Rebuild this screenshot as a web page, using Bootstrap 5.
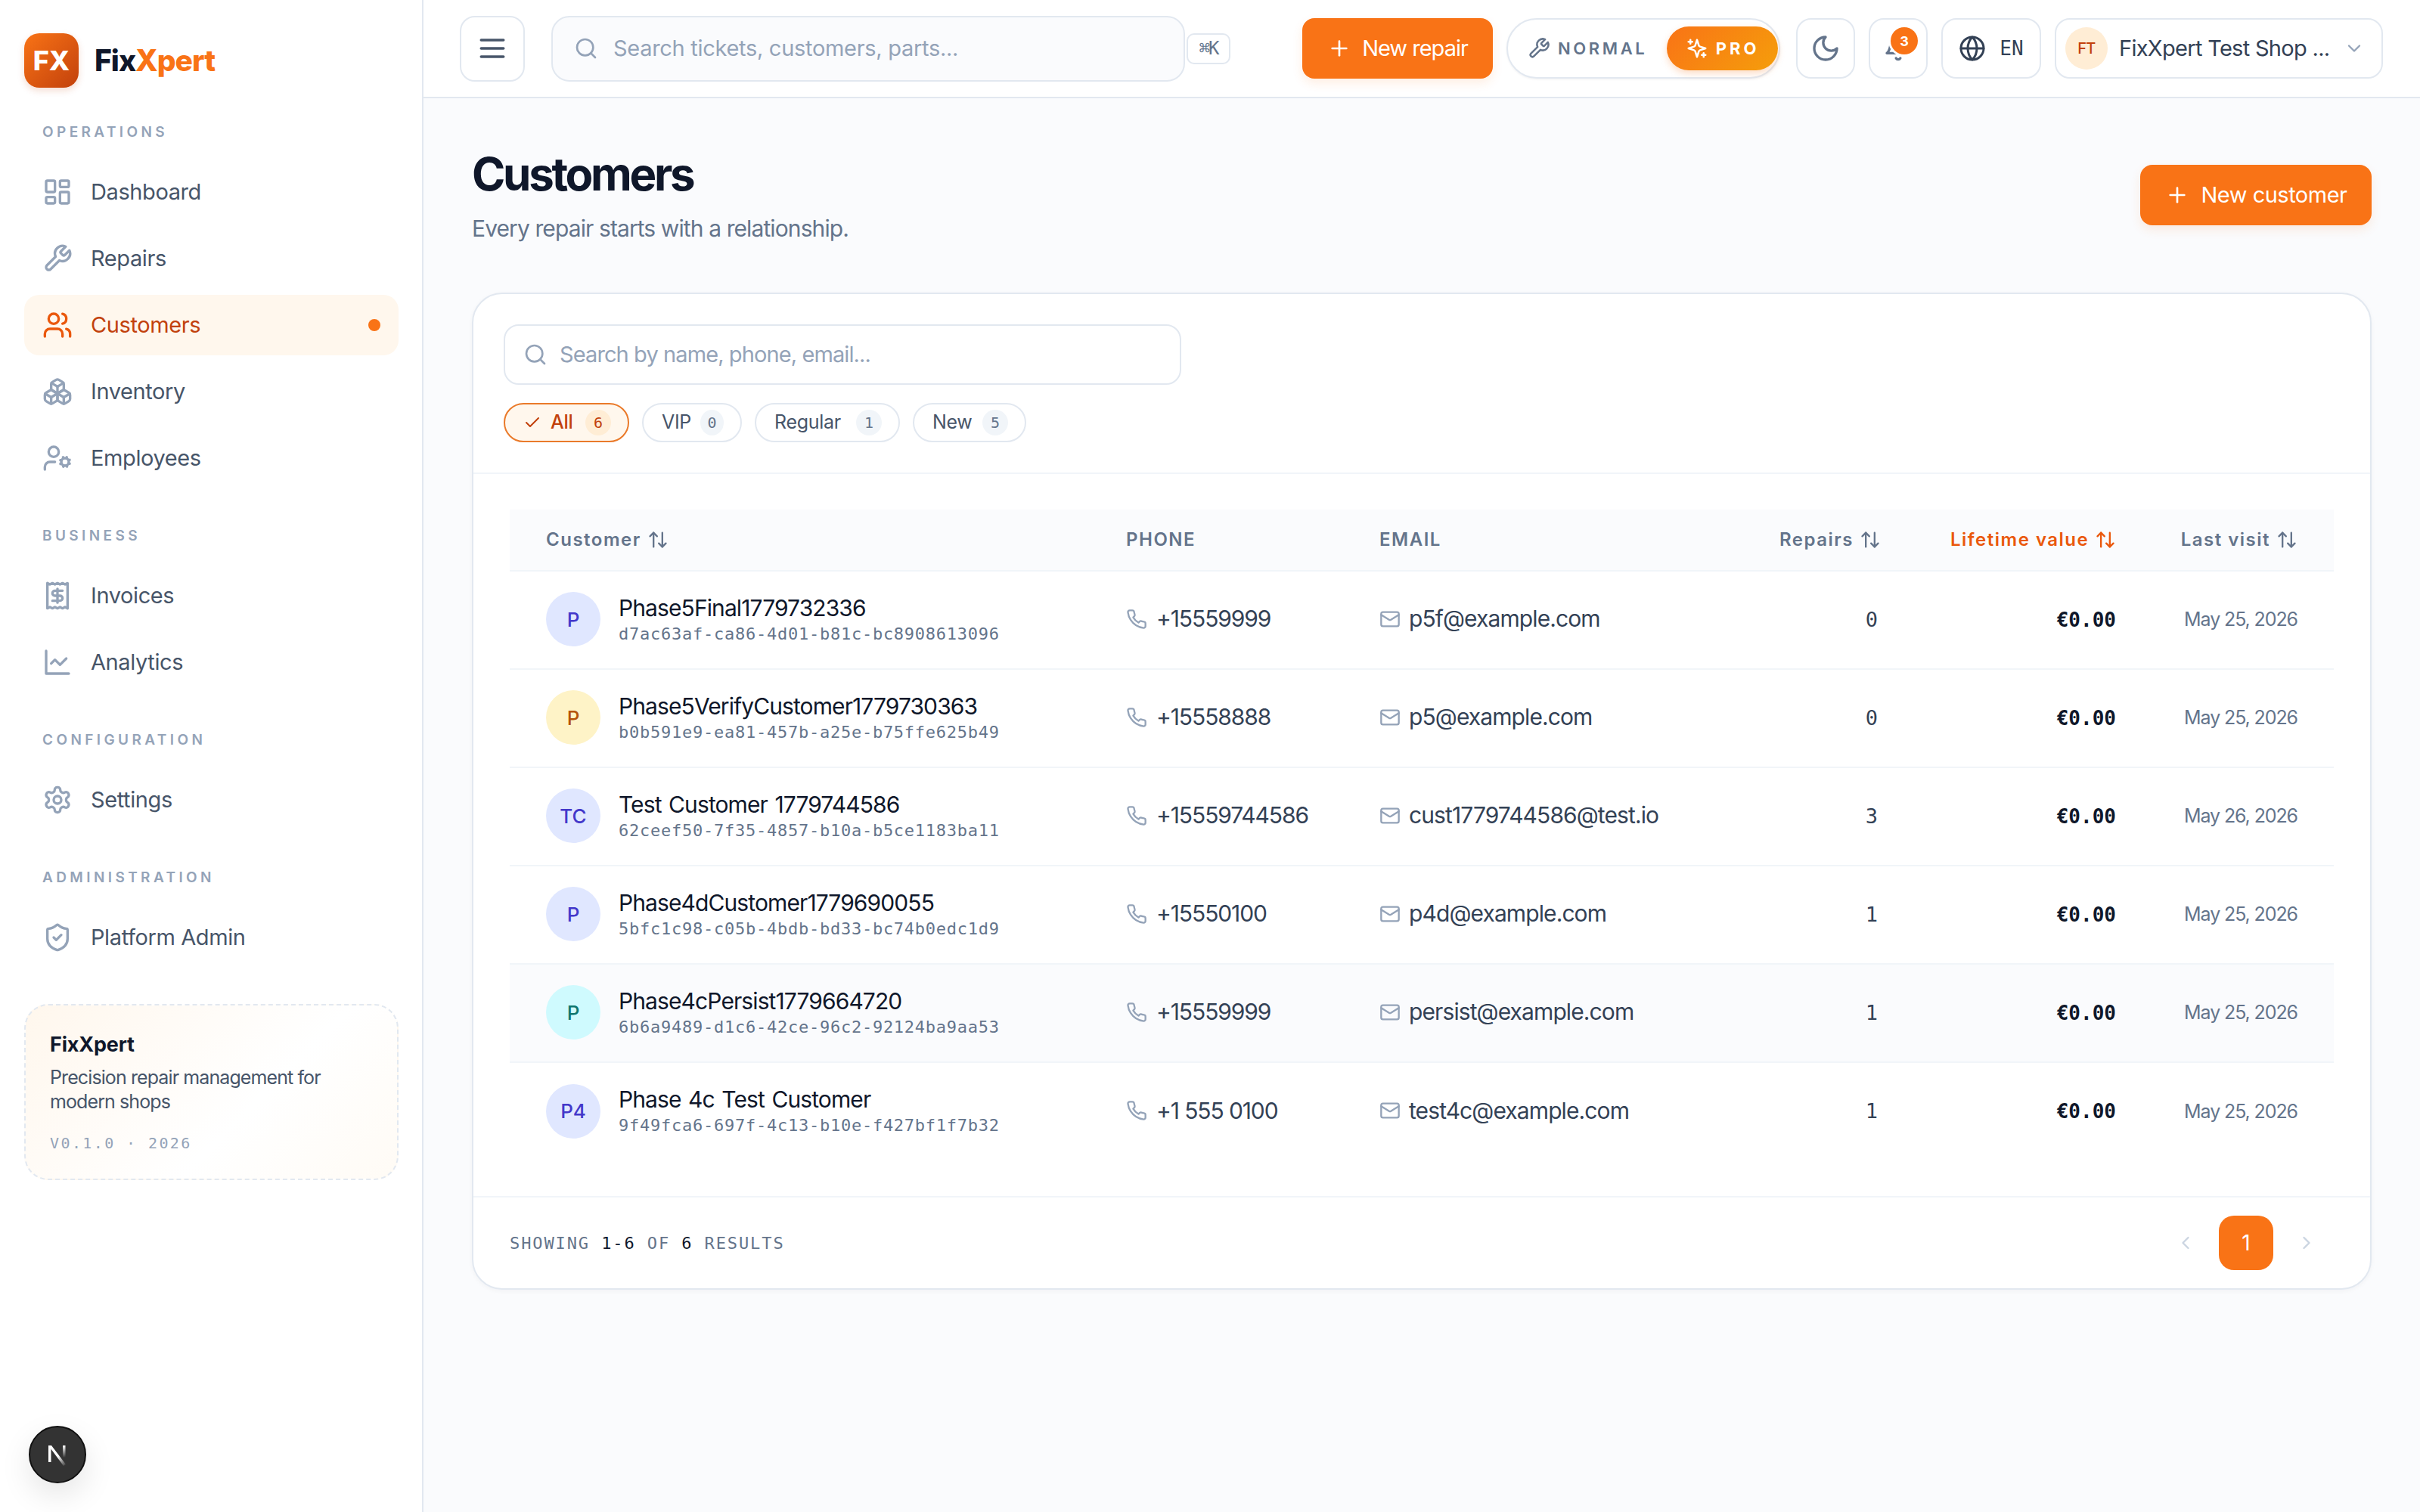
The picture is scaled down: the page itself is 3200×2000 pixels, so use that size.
<!DOCTYPE html>
<html lang="en">
<head>
<meta charset="utf-8">
<title>Customers</title>
<link href="https://cdn.jsdelivr.net/npm/bootstrap@5.3.0/dist/css/bootstrap.min.css" rel="stylesheet">
<style>
body{font-family:Inter,"Liberation Sans",sans-serif;background:#fafbfd;color:#0f172a;}
svg.ic{fill:none;stroke:currentColor;stroke-width:2;stroke-linecap:round;stroke-linejoin:round;flex:none;display:block}
.mono{font-family:"DejaVu Sans Mono","Liberation Mono",monospace}
.shell{min-height:2000px}
.side{width:560px;flex:none;background:#fff;border-right:2px solid #e2e8f0;padding:44px 31px 0 32px}
.brand{gap:21px;height:72px;margin-bottom:46px}
.logo-box{width:72px;height:72px;border-radius:20px;background:linear-gradient(135deg,#f97316,#c2410c);color:#fff;font-weight:800;font-size:36px;box-shadow:0 4px 10px rgba(194,65,12,.18)}
.brand-name{font-weight:800;font-size:39px;letter-spacing:-1px;color:#0f172a}
.brand-name span{color:#f97316}
.sect{font-size:19px;font-weight:600;letter-spacing:4.4px;color:#94a3b8;padding-left:24px;line-height:26px;text-transform:uppercase}
.sect-gap{margin-top:50px}
.side-nav{gap:8px;margin-top:26px}
.side-link{height:80px;border-radius:20px;padding:0 24px;gap:24px;font-size:29px;letter-spacing:-.4px;color:#475569;text-decoration:none}
.side-link svg{color:#94a3b8}
.side-link.on{background:#fff7ed;color:#c2410c}
.side-link.on svg{color:#ea580c}
.dot-on{width:16px;height:16px;border-radius:50%;background:#f97316;margin-left:auto}
.promo{margin-top:48px;height:233px;border:2px dashed #e2e8f0;border-radius:32px;background:linear-gradient(135deg,#fff7ed,#fff 60%,#fffbf5);padding:34px 32px 0}
.promo-t{font-size:27px;font-weight:700;letter-spacing:-.2px;line-height:36px}
.promo-d{font-size:25px;letter-spacing:-.9px;color:#475569;line-height:32px;margin-top:9px}
.promo-v{font-size:20px;letter-spacing:2.4px;color:#94a3b8;margin-top:25px;line-height:28px}
.nx{position:fixed;left:38px;top:1886px;width:76px;height:76px;border-radius:50%;background:#333;border:2px solid #111;color:#fff;box-shadow:0 16px 40px rgba(0,0,0,.1)}
.main-col{min-width:0}
.top{height:130px;background:#fff;border-bottom:2px solid #e2e8f0;padding:0 48px 0 48px}
.tbtn{border:2px solid #e2e8f0;border-radius:20px;background:#fff;height:80px;color:#64748b}
.menu-b{width:86px;height:87px;margin-right:35px;color:#475569}
.tsearch{width:838px;height:87px;border:2px solid #e2e8f0;border-radius:24px;background:#fafbfd;padding:0 28px;gap:20px;font-size:29px;letter-spacing:-.3px;color:#94a3b8}
.kbd-box{width:58px;height:41px;margin-left:2px;border:2px solid #e2e8f0;border-radius:10px;font-size:24px;letter-spacing:-2px;color:#64748b}
.btn-or{background:#f97316;border:0;color:#fff;border-radius:16px;height:80px;font-size:29px;letter-spacing:-1px;gap:14px;box-shadow:0 6px 14px rgba(249,115,22,.12)}
.btn-or:hover{background:#f97316;color:#fff}
.nrep{width:252px;margin-left:95px;margin-right:18px}
.mode{width:362px;height:80px;border:2px solid #e2e8f0;border-radius:40px;background:#fff;padding:0 1px 0 26px;margin-right:21px;box-shadow:0 1px 3px rgba(15,23,42,.06)}
.mode-n{gap:10px;font-size:22px;font-weight:600;letter-spacing:3.6px;color:#64748b}
.mode-p{margin-left:auto;width:147px;height:58px;border-radius:30px;background:linear-gradient(135deg,#f97316,#f59e0b);color:#fff;gap:10px;font-size:22px;font-weight:700;letter-spacing:4px;box-shadow:0 4px 10px rgba(249,115,22,.25)}
.square{width:78px;margin-right:18px}
.lang{width:132px;margin-right:18px;gap:18px;color:#334155;font-size:26px;font-weight:500}
.shop{width:434px;padding:0 22px 0 12px;gap:15px;font-size:29px;letter-spacing:-.7px;color:#334155;white-space:nowrap}
.shop svg{color:#94a3b8}
.shop-av{width:56px;height:56px;border-radius:50%;background:#ffedd5;color:#c2410c;font-size:20px;font-weight:500;flex:none}
.bell-wrap{position:relative}
.bell-ic{margin-top:-4px}
.bell-n{position:absolute;left:27px;top:10px;width:36px;height:36px;border-radius:50%;background:#f97316;color:#fff;font-size:18px;font-weight:700;box-shadow:0 0 0 3px #fff}
.content{padding:64px 64px 0 64px}
.h-title{font-size:60px;font-weight:700;letter-spacing:-3.3px;line-height:72px;margin:0}
.h-sub{font-size:30px;letter-spacing:-.9px;color:#64748b;line-height:40px;margin-top:16px}
.ncust{width:306px;margin-top:24px;gap:16px;letter-spacing:-.5px}
.panel{margin-top:65px;background:#fff;border:2px solid #e2e8f0;border-radius:40px;box-shadow:0 2px 6px rgba(15,23,42,.04);overflow:hidden}
.p-head{padding:40px 40px 40px;border-bottom:2px solid #f1f5f9}
.fsearch{width:896px;height:80px;border:2px solid #e2e8f0;border-radius:20px;background:#fff;padding:0 24px;gap:16px;font-size:29px;letter-spacing:-.9px;color:#94a3b8}
.chips{gap:17px;margin-top:24px}
.chip{height:52px;border:2px solid #e2e8f0;border-radius:26px;padding:0 22px 0 24px;gap:12px;font-size:25px;letter-spacing:-.3px;color:#475569;background:#fff}
.chip.on{border-color:#ea7a2a;background:#fff7ed;color:#c2410c;font-weight:500}
.chip-all{width:166px}.chip-vip{width:132px}.chip-reg{width:192px}.chip-new{width:150px}
.cnt{width:34px;height:34px;border-radius:50%;background:#f1f5f9;font-size:20px;color:#64748b;margin-left:auto;letter-spacing:0}
.chip.on .cnt{background:#ffedd5;color:#c2410c}
.t-wrap{padding:47px 48px 49px 48px}
.t-main{table-layout:fixed;width:2412px;margin:0;border-collapse:collapse}
.t-main>:not(caption)>*>*{padding:0 48px;border-bottom:2px solid #f1f5f9;background:transparent;box-shadow:none;vertical-align:middle}
.t-main thead th{height:81px;background:#fafbfd;font-size:24px;font-weight:600;letter-spacing:1.5px;color:#64748b;white-space:nowrap}
.t-main tbody td{height:130px;font-size:30px;letter-spacing:-1.1px;color:#334155}
.t-main tbody tr:last-child td{border-bottom:0}
.t-main tbody tr.hov td{background:#fafbfd}
.t-main thead th.sorted{color:#ea580c}
.c1{width:767px}.c2{width:335px}.c3{width:529px}.c4{width:226px}.c5{width:315px}.c6{width:240px}
svg.ic.sort{display:inline-block;vertical-align:-6px;margin-left:8px}
.cust-row{gap:24px;margin-top:-2px}
.ava{width:72px;height:72px;border-radius:50%;font-size:26px;font-weight:500;letter-spacing:0;flex:none}
.a-in{background:#e0e7ff;color:#4338ca}.a-am{background:#fef3c7;color:#b45309}.a-cy{background:#cffafe;color:#0f766e}
.nm{font-size:30px;color:#0f172a;line-height:36px;white-space:nowrap;letter-spacing:-.9px;word-spacing:2px}
.uid{font-size:22px;letter-spacing:.75px;color:#64748b;line-height:28px;white-space:nowrap;margin-top:3px}
.cell-i{gap:12px;white-space:nowrap;margin-top:-3px}
.mail-t{gap:11px;letter-spacing:-.9px}
.cell-i svg{color:#94a3b8}
.t-main tbody td.num{font-size:27px;letter-spacing:0;text-align:right}
.t-main tbody td.money{font-size:26px;font-weight:700;color:#0f172a;letter-spacing:0;text-align:right}
.t-main tbody td.date{font-size:25px;letter-spacing:-1.1px;color:#64748b;padding-right:48px;padding-left:0;text-align:right;white-space:nowrap}
.p-foot{border-top:2px solid #f1f5f9;height:122px;padding:0 48px;margin-top:-2px}
.showing{font-size:22px;letter-spacing:1.9px;color:#64748b;text-transform:uppercase}
.showing b{font-weight:400;color:#0f172a}
.pg-n{width:72px;height:72px;border-radius:20px;background:#f97316;color:#fff;font-size:28px}
.pg-a{width:72px;color:#cbd5e1}
</style>
</head>
<body>
<svg width="0" height="0" class="position-absolute">
<defs>
<symbol id="i-dash" viewBox="0 0 24 24"><rect x="3" y="3" width="7" height="9" rx="1"/><rect x="14" y="3" width="7" height="5" rx="1"/><rect x="14" y="12" width="7" height="9" rx="1"/><rect x="3" y="16" width="7" height="5" rx="1"/></symbol>
<symbol id="i-wrench" viewBox="0 0 24 24"><path d="M14.7 6.3a1 1 0 0 0 0 1.4l1.6 1.6a1 1 0 0 0 1.4 0l3.77-3.77a6 6 0 0 1-7.94 7.94l-6.91 6.91a2.12 2.12 0 0 1-3-3l6.91-6.91a6 6 0 0 1 7.94-7.94l-3.76 3.76z"/></symbol>
<symbol id="i-users" viewBox="0 0 24 24"><path d="M16 21v-2a4 4 0 0 0-4-4H6a4 4 0 0 0-4 4v2"/><circle cx="9" cy="7" r="4"/><path d="M22 21v-2a4 4 0 0 0-3-3.87"/><path d="M16 3.13a4 4 0 0 1 0 7.75"/></symbol>
<symbol id="i-boxes" viewBox="0 0 24 24"><path d="M2.97 12.92A2 2 0 0 0 2 14.63v3.24a2 2 0 0 0 .97 1.71l3 1.8a2 2 0 0 0 2.06 0L12 19v-5.5l-5-3-4.03 2.42Z"/><path d="m7 16.5-4.74-2.85"/><path d="m7 16.5 5-3"/><path d="M7 16.5v5.17"/><path d="M12 13.5V19l3.97 2.38a2 2 0 0 0 2.06 0l3-1.8a2 2 0 0 0 .97-1.71v-3.24a2 2 0 0 0-.97-1.71L17 10.5l-5 3Z"/><path d="m17 16.5-5-3"/><path d="m17 16.5 4.74-2.85"/><path d="M17 16.5v5.17"/><path d="M7.97 4.42A2 2 0 0 0 7 6.13v4.37l5 3 5-3V6.13a2 2 0 0 0-.97-1.71l-3-1.8a2 2 0 0 0-2.06 0l-3 1.8Z"/><path d="M12 8 7.26 5.15"/><path d="m12 8 4.74-2.85"/><path d="M12 13.5V8"/></symbol>
<symbol id="i-ucog" viewBox="0 0 24 24"><circle cx="18" cy="15" r="3"/><circle cx="9" cy="7" r="4"/><path d="M10 15H6a4 4 0 0 0-4 4v2"/><path d="m21.7 16.4-.9-.3"/><path d="m15.2 13.9-.9-.3"/><path d="m16.6 18.7.3-.9"/><path d="m19.1 12.2.3-.9"/><path d="m19.6 18.7-.4-1"/><path d="m16.8 12.3-.4-1"/><path d="m14.3 16.6 1-.4"/><path d="m20.7 13.8 1-.4"/></symbol>
<symbol id="i-receipt" viewBox="0 0 24 24"><path d="M4 2v20l2-1 2 1 2-1 2 1 2-1 2 1 2-1 2 1V2l-2 1-2-1-2 1-2-1-2 1-2-1-2 1Z"/><path d="M16 8h-6a2 2 0 1 0 0 4h4a2 2 0 1 1 0 4H8"/><path d="M12 17.5v-11"/></symbol>
<symbol id="i-chart" viewBox="0 0 24 24"><path d="M3 3v18h18"/><path d="m19 9-5 5-4-4-3 3"/></symbol>
<symbol id="i-gear" viewBox="0 0 24 24"><path d="M12.22 2h-.44a2 2 0 0 0-2 2v.18a2 2 0 0 1-1 1.73l-.43.25a2 2 0 0 1-2 0l-.15-.08a2 2 0 0 0-2.73.73l-.22.38a2 2 0 0 0 .73 2.73l.15.1a2 2 0 0 1 1 1.72v.51a2 2 0 0 1-1 1.74l-.15.09a2 2 0 0 0-.73 2.73l.22.38a2 2 0 0 0 2.73.73l.15-.08a2 2 0 0 1 2 0l.43.25a2 2 0 0 1 1 1.73V20a2 2 0 0 0 2 2h.44a2 2 0 0 0 2-2v-.18a2 2 0 0 1 1-1.73l.43-.25a2 2 0 0 1 2 0l.15.08a2 2 0 0 0 2.73-.73l.22-.39a2 2 0 0 0-.73-2.73l-.15-.08a2 2 0 0 1-1-1.74v-.5a2 2 0 0 1 1-1.74l.15-.09a2 2 0 0 0 .73-2.73l-.22-.38a2 2 0 0 0-2.73-.73l-.15.08a2 2 0 0 1-2 0l-.43-.25a2 2 0 0 1-1-1.73V4a2 2 0 0 0-2-2z"/><circle cx="12" cy="12" r="3"/></symbol>
<symbol id="i-shield" viewBox="0 0 24 24"><path d="M20 13c0 5-3.5 7.5-7.66 8.95a1 1 0 0 1-.67-.01C7.5 20.5 4 18 4 13V6a1 1 0 0 1 1-1c2 0 4.5-1.2 6.24-2.72a1.17 1.17 0 0 1 1.52 0C14.51 3.81 17 5 19 5a1 1 0 0 1 1 1z"/><path d="m9 12 2 2 4-4"/></symbol>
<symbol id="i-menu" viewBox="0 0 24 24"><path d="M4 12h16"/><path d="M4 6h16"/><path d="M4 18h16"/></symbol>
<symbol id="i-search" viewBox="0 0 24 24"><circle cx="11" cy="11" r="8"/><path d="m21 21-4.3-4.3"/></symbol>
<symbol id="i-plus" viewBox="0 0 24 24"><path d="M5 12h14"/><path d="M12 5v14"/></symbol>
<symbol id="i-moon" viewBox="0 0 24 24"><path d="M12 3a6 6 0 0 0 9 9 9 9 0 1 1-9-9Z"/></symbol>
<symbol id="i-bell" viewBox="0 0 24 24"><path d="M6 8a6 6 0 0 1 12 0c0 7 3 9 3 9H3s3-2 3-9"/><path d="M10.3 21a1.94 1.94 0 0 0 3.4 0"/></symbol>
<symbol id="i-globe" viewBox="0 0 24 24"><circle cx="12" cy="12" r="10"/><path d="M12 2a14.5 14.5 0 0 0 0 20 14.5 14.5 0 0 0 0-20"/><path d="M2 12h20"/></symbol>
<symbol id="i-spark" viewBox="0 0 24 24"><path d="m12 3-1.912 5.813a2 2 0 0 1-1.275 1.275L3 12l5.813 1.912a2 2 0 0 1 1.275 1.275L12 21l1.912-5.813a2 2 0 0 1 1.275-1.275L21 12l-5.813-1.912a2 2 0 0 1-1.275-1.275L12 3Z"/><path d="M5 3v4"/><path d="M19 17v4"/><path d="M3 5h4"/><path d="M17 19h4"/></symbol>
<symbol id="i-down" viewBox="0 0 24 24"><path d="m6 9 6 6 6-6"/></symbol>
<symbol id="i-left" viewBox="0 0 24 24"><path d="m15 18-6-6 6-6"/></symbol>
<symbol id="i-right" viewBox="0 0 24 24"><path d="m9 18 6-6-6-6"/></symbol>
<symbol id="i-check" viewBox="0 0 24 24"><path d="M20 6 9 17l-5-5"/></symbol>
<symbol id="i-sort" viewBox="0 0 24 24"><path d="m21 16-4 4-4-4"/><path d="M17 20V4"/><path d="m3 8 4-4 4 4"/><path d="M7 4v16"/></symbol>
<symbol id="i-phone" viewBox="0 0 24 24"><path d="M22 16.92v3a2 2 0 0 1-2.18 2 19.79 19.79 0 0 1-8.63-3.07 19.5 19.5 0 0 1-6-6 19.79 19.79 0 0 1-3.07-8.67A2 2 0 0 1 4.11 2h3a2 2 0 0 1 2 1.72 12.84 12.84 0 0 0 .7 2.81 2 2 0 0 1-.45 2.11L8.09 9.91a16 16 0 0 0 6 6l1.27-1.27a2 2 0 0 1 2.11-.45 12.84 12.84 0 0 0 2.81.7A2 2 0 0 1 22 16.92z"/></symbol>
<symbol id="i-mail" viewBox="0 0 24 24"><rect x="2" y="4" width="20" height="16" rx="2"/><path d="m22 7-8.97 5.7a1.94 1.94 0 0 1-2.06 0L2 7"/></symbol>
</defs>
</svg>
<div class="shell d-flex">
  <aside class="side">
    <div class="brand d-flex align-items-center">
      <div class="logo-box d-flex align-items-center justify-content-center">FX</div>
      <div class="brand-name">Fix<span>Xpert</span></div>
    </div>
    <div class="sect">Operations</div>
    <nav class="side-nav d-flex flex-column">
      <a class="side-link d-flex align-items-center" href="#"><svg class="ic" width="40" height="40"><use href="#i-dash"/></svg>Dashboard</a>
      <a class="side-link d-flex align-items-center" href="#"><svg class="ic" width="40" height="40"><use href="#i-wrench"/></svg>Repairs</a>
      <a class="side-link on d-flex align-items-center" href="#"><svg class="ic" width="40" height="40"><use href="#i-users"/></svg>Customers<span class="dot-on"></span></a>
      <a class="side-link d-flex align-items-center" href="#"><svg class="ic" width="40" height="40"><use href="#i-boxes"/></svg>Inventory</a>
      <a class="side-link d-flex align-items-center" href="#"><svg class="ic" width="40" height="40"><use href="#i-ucog"/></svg>Employees</a>
    </nav>
    <div class="sect sect-gap">Business</div>
    <nav class="side-nav d-flex flex-column">
      <a class="side-link d-flex align-items-center" href="#"><svg class="ic" width="40" height="40"><use href="#i-receipt"/></svg>Invoices</a>
      <a class="side-link d-flex align-items-center" href="#"><svg class="ic" width="40" height="40"><use href="#i-chart"/></svg>Analytics</a>
    </nav>
    <div class="sect sect-gap">Configuration</div>
    <nav class="side-nav d-flex flex-column">
      <a class="side-link d-flex align-items-center" href="#"><svg class="ic" width="40" height="40"><use href="#i-gear"/></svg>Settings</a>
    </nav>
    <div class="sect sect-gap">Administration</div>
    <nav class="side-nav d-flex flex-column">
      <a class="side-link d-flex align-items-center" href="#"><svg class="ic" width="40" height="40"><use href="#i-shield"/></svg>Platform Admin</a>
    </nav>
    <div class="promo">
      <div class="promo-t">FixXpert</div>
      <div class="promo-d">Precision repair management for modern shops</div>
      <div class="promo-v mono">V0.1.0 · 2026</div>
    </div>
  </aside>
  <div class="main-col flex-grow-1">
    <header class="top d-flex align-items-center">
      <button class="tbtn menu-b d-flex align-items-center justify-content-center" type="button"><svg class="ic" width="44" height="44"><use href="#i-menu"/></svg></button>
      <div class="tsearch d-flex align-items-center"><svg class="ic" width="32" height="32"><use href="#i-search"/></svg>Search tickets, customers, parts...</div>
      <div class="kbd-box mono d-flex align-items-center justify-content-center">⌘K</div>
      <button class="btn btn-or nrep d-flex align-items-center justify-content-center" type="button"><svg class="ic" width="32" height="32"><use href="#i-plus"/></svg>New repair</button>
      <div class="mode d-flex align-items-center">
        <span class="mode-n d-flex align-items-center"><svg class="ic" width="30" height="30"><use href="#i-wrench"/></svg>NORMAL</span>
        <span class="mode-p d-flex align-items-center justify-content-center"><svg class="ic" width="30" height="30"><use href="#i-spark"/></svg>PRO</span>
      </div>
      <button class="tbtn square d-flex align-items-center justify-content-center" type="button"><svg class="ic" width="40" height="40"><use href="#i-moon"/></svg></button>
      <button class="tbtn square bell-wrap d-flex align-items-center justify-content-center" type="button"><svg class="ic bell-ic" width="40" height="40"><use href="#i-bell"/></svg><span class="bell-n d-flex align-items-center justify-content-center">3</span></button>
      <button class="tbtn lang d-flex align-items-center justify-content-center" type="button"><svg class="ic" width="36" height="36"><use href="#i-globe"/></svg><span class="mono">EN</span></button>
      <button class="tbtn shop d-flex align-items-center" type="button"><span class="shop-av d-flex align-items-center justify-content-center">FT</span><span class="flex-grow-1 text-start">FixXpert Test Shop ...</span><svg class="ic" width="28" height="28"><use href="#i-down"/></svg></button>
    </header>
    <main class="content">
      <div class="d-flex justify-content-between align-items-start">
        <div>
          <h1 class="h-title">Customers</h1>
          <div class="h-sub">Every repair starts with a relationship.</div>
        </div>
        <button class="btn btn-or ncust d-flex align-items-center justify-content-center" type="button"><svg class="ic" width="32" height="32"><use href="#i-plus"/></svg>New customer</button>
      </div>
      <section class="panel">
        <div class="p-head">
          <div class="fsearch d-flex align-items-center"><svg class="ic" width="32" height="32"><use href="#i-search"/></svg>Search by name, phone, email...</div>
          <div class="chips d-flex">
            <span class="chip chip-all on d-flex align-items-center"><svg class="ic" width="24" height="24"><use href="#i-check"/></svg>All<span class="cnt mono d-flex align-items-center justify-content-center">6</span></span>
            <span class="chip chip-vip d-flex align-items-center">VIP<span class="cnt mono d-flex align-items-center justify-content-center">0</span></span>
            <span class="chip chip-reg d-flex align-items-center">Regular<span class="cnt mono d-flex align-items-center justify-content-center">1</span></span>
            <span class="chip chip-new d-flex align-items-center">New<span class="cnt mono d-flex align-items-center justify-content-center">5</span></span>
          </div>
        </div>
        <div class="t-wrap">
          <table class="table t-main">
            <colgroup><col class="c1"><col class="c2"><col class="c3"><col class="c4"><col class="c5"><col class="c6"></colgroup>
            <thead><tr>
              <th>Customer<svg class="ic sort" width="28" height="28"><use href="#i-sort"/></svg></th>
              <th>PHONE</th>
              <th>EMAIL</th>
              <th class="text-end">Repairs<svg class="ic sort" width="28" height="28"><use href="#i-sort"/></svg></th>
              <th class="text-end sorted">Lifetime value<svg class="ic sort" width="28" height="28"><use href="#i-sort"/></svg></th>
              <th class="text-end ps-0">Last visit<svg class="ic sort" width="28" height="28"><use href="#i-sort"/></svg></th>
            </tr></thead>
            <tbody>
              <tr><td><div class="cust-row d-flex align-items-center"><span class="ava a-in d-flex align-items-center justify-content-center">P</span><div><div class="nm">Phase5Final1779732336</div><div class="uid mono">d7ac63af-ca86-4d01-b81c-bc8908613096</div></div></div></td>
                <td><div class="cell-i d-flex align-items-center"><svg class="ic" width="28" height="28"><use href="#i-phone"/></svg>+15559999</div></td>
                <td><div class="cell-i mail-t d-flex align-items-center"><svg class="ic" width="28" height="28"><use href="#i-mail"/></svg>p5f@example.com</div></td>
                <td class="num mono">0</td><td class="money mono">€0.00</td><td class="date">May 25, 2026</td></tr>
              <tr><td><div class="cust-row d-flex align-items-center"><span class="ava a-am d-flex align-items-center justify-content-center">P</span><div><div class="nm">Phase5VerifyCustomer1779730363</div><div class="uid mono">b0b591e9-ea81-457b-a25e-b75ffe625b49</div></div></div></td>
                <td><div class="cell-i d-flex align-items-center"><svg class="ic" width="28" height="28"><use href="#i-phone"/></svg>+15558888</div></td>
                <td><div class="cell-i mail-t d-flex align-items-center"><svg class="ic" width="28" height="28"><use href="#i-mail"/></svg>p5@example.com</div></td>
                <td class="num mono">0</td><td class="money mono">€0.00</td><td class="date">May 25, 2026</td></tr>
              <tr><td><div class="cust-row d-flex align-items-center"><span class="ava a-in d-flex align-items-center justify-content-center">TC</span><div><div class="nm">Test Customer 1779744586</div><div class="uid mono">62ceef50-7f35-4857-b10a-b5ce1183ba11</div></div></div></td>
                <td><div class="cell-i d-flex align-items-center"><svg class="ic" width="28" height="28"><use href="#i-phone"/></svg>+15559744586</div></td>
                <td><div class="cell-i mail-t d-flex align-items-center"><svg class="ic" width="28" height="28"><use href="#i-mail"/></svg>cust1779744586@test.io</div></td>
                <td class="num mono">3</td><td class="money mono">€0.00</td><td class="date">May 26, 2026</td></tr>
              <tr><td><div class="cust-row d-flex align-items-center"><span class="ava a-in d-flex align-items-center justify-content-center">P</span><div><div class="nm">Phase4dCustomer1779690055</div><div class="uid mono">5bfc1c98-c05b-4bdb-bd33-bc74b0edc1d9</div></div></div></td>
                <td><div class="cell-i d-flex align-items-center"><svg class="ic" width="28" height="28"><use href="#i-phone"/></svg>+15550100</div></td>
                <td><div class="cell-i mail-t d-flex align-items-center"><svg class="ic" width="28" height="28"><use href="#i-mail"/></svg>p4d@example.com</div></td>
                <td class="num mono">1</td><td class="money mono">€0.00</td><td class="date">May 25, 2026</td></tr>
              <tr class="hov"><td><div class="cust-row d-flex align-items-center"><span class="ava a-cy d-flex align-items-center justify-content-center">P</span><div><div class="nm">Phase4cPersist1779664720</div><div class="uid mono">6b6a9489-d1c6-42ce-96c2-92124ba9aa53</div></div></div></td>
                <td><div class="cell-i d-flex align-items-center"><svg class="ic" width="28" height="28"><use href="#i-phone"/></svg>+15559999</div></td>
                <td><div class="cell-i mail-t d-flex align-items-center"><svg class="ic" width="28" height="28"><use href="#i-mail"/></svg>persist@example.com</div></td>
                <td class="num mono">1</td><td class="money mono">€0.00</td><td class="date">May 25, 2026</td></tr>
              <tr><td><div class="cust-row d-flex align-items-center"><span class="ava a-in d-flex align-items-center justify-content-center">P4</span><div><div class="nm">Phase 4c Test Customer</div><div class="uid mono">9f49fca6-697f-4c13-b10e-f427bf1f7b32</div></div></div></td>
                <td><div class="cell-i d-flex align-items-center"><svg class="ic" width="28" height="28"><use href="#i-phone"/></svg>+1 555 0100</div></td>
                <td><div class="cell-i mail-t d-flex align-items-center"><svg class="ic" width="28" height="28"><use href="#i-mail"/></svg>test4c@example.com</div></td>
                <td class="num mono">1</td><td class="money mono">€0.00</td><td class="date">May 25, 2026</td></tr>
            </tbody>
          </table>
        </div>
        <div class="p-foot d-flex align-items-center justify-content-between">
          <div class="showing mono">Showing <b>1-6</b> of <b>6</b> results</div>
          <div class="d-flex align-items-center gap-2">
            <span class="pg-a d-flex justify-content-center"><svg class="ic" width="28" height="28"><use href="#i-left"/></svg></span>
            <span class="pg-n d-flex align-items-center justify-content-center">1</span>
            <span class="pg-a d-flex justify-content-center"><svg class="ic" width="28" height="28"><use href="#i-right"/></svg></span>
          </div>
        </div>
      </section>
    </main>
  </div>
</div>
<div class="nx d-flex align-items-center justify-content-center">
  <svg width="40" height="40" viewBox="0 0 40 40"><defs><linearGradient id="nxg" x1="0" y1="0" x2="1" y2="1"><stop offset=".55" stop-color="#fff"/><stop offset="1" stop-color="#fff" stop-opacity="0"/></linearGradient><linearGradient id="nxh" x1="0" y1="0" x2="0" y2="1"><stop offset="0" stop-color="#fff"/><stop offset="1" stop-color="#fff" stop-opacity="0"/></linearGradient></defs><rect x="8" y="8" width="3.5" height="22" fill="#fff"/><path d="M8 8h4l19 25-3 2Z" fill="url(#nxg)"/><rect x="27" y="8" width="3.5" height="16" fill="url(#nxh)"/></svg>
</div>
<script src="https://cdn.jsdelivr.net/npm/bootstrap@5.3.0/dist/js/bootstrap.bundle.min.js"></script>
</body>
</html>
